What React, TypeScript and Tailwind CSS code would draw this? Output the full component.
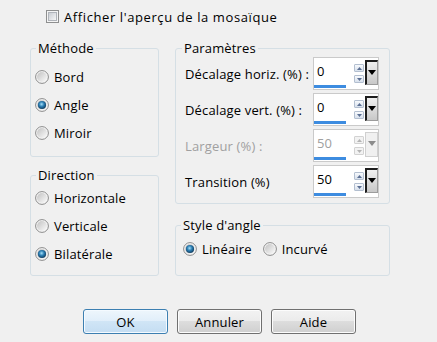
import React, { useId } from 'react';

const Radio: React.FC<{ label: string; checked?: boolean }> = ({ label, checked = false }) => {
  const id = useId().replace(/[^a-zA-Z0-9]/g, '');
  return (
    <div className="flex h-[28px] items-center gap-[5px]">
      <svg width="14" height="14" viewBox="0 0 14 14" className="shrink-0">
        <defs>
          <linearGradient id={`${id}b`} x1="0" y1="0" x2="1" y2="1">
            <stop offset="0" stopColor="#c2c2c2" />
            <stop offset="1" stopColor="#fbfbfb" />
          </linearGradient>
          <radialGradient id={`${id}d`} cx="0.45" cy="0.4" r="0.65">
            <stop offset="0" stopColor="#a6e0f8" />
            <stop offset="0.45" stopColor="#2c7fb4" />
            <stop offset="1" stopColor="#0b3150" />
          </radialGradient>
        </defs>
        <circle cx="7" cy="7" r="6.4" fill="#f6f6f6" stroke="#8a8a8a" />
        <circle cx="7" cy="7" r="5" fill={`url(#${id}b)`} />
        {checked && <circle cx="7" cy="7" r="4.1" fill={`url(#${id}d)`} />}
      </svg>
      <span className="leading-[16px]">{label}</span>
    </div>
  );
};

const SpinBox: React.FC<{ value: string; disabled?: boolean }> = ({ value, disabled = false }) => {
  const arrow = disabled ? '#b4b4b4' : '#5a6e92';
  const btn = disabled
    ? 'border-[#d2d2d2] bg-[#f2f2f2]'
    : 'border-[#b3bfd0] bg-[linear-gradient(#f8fafd,#d7e0ec)]';
  return (
    <div className="flex h-[33px] w-[66px] shrink-0 border border-[#cacaca] bg-white">
      <div className="flex w-[40px] flex-col">
        <span className={`pl-[3px] pt-[5px] leading-[16px] ${disabled ? 'text-[#a0a0a0]' : 'text-black'}`}>{value}</span>
        <div className="mt-auto mb-[1px] h-[3px] w-[32px] bg-[#3d8ce0]" />
      </div>
      <div className="flex w-[10px] flex-col gap-[3px] pt-[6px]">
        <div className={`flex h-[8px] items-center justify-center rounded-[1px] border ${btn}`}>
          <svg width="5" height="3" viewBox="0 0 5 3"><path d="M0 3 L2.5 0 L5 3 Z" fill={arrow} /></svg>
        </div>
        <div className={`flex h-[8px] items-center justify-center rounded-[1px] border ${btn}`}>
          <svg width="5" height="3" viewBox="0 0 5 3"><path d="M0 0 L5 0 L2.5 3 Z" fill={arrow} /></svg>
        </div>
      </div>
      <div
        className={`ml-[1px] mt-[2px] flex h-[25px] w-[13px] justify-center pt-[8px] ${
          disabled
            ? 'border border-[#d0d0d0] bg-[#f0f0f0]'
            : 'border-t-2 border-l-2 border-r border-b border-t-[#1e1e1e] border-l-[#1e1e1e] border-r-[#9c9c9c] border-b-[#9c9c9c] bg-[linear-gradient(#efefef,#c8c8c8)]'
        }`}
      >
        <svg width="8" height="5" viewBox="0 0 8 5"><path d="M0 0 L8 0 L4 5 Z" fill={disabled ? '#8c8c8c' : '#000'} /></svg>
      </div>
    </div>
  );
};

const Row: React.FC<{ label: string; value: string; disabled?: boolean }> = ({ label, value, disabled }) => (
  <div className="flex h-[33px] items-center justify-between">
    <span className={`leading-[16px] ${disabled ? 'text-[#a0a0a0]' : 'text-black'}`}>{label}</span>
    <SpinBox value={value} disabled={disabled} />
  </div>
);

const Group: React.FC<{ title: string; className: string; children: React.ReactNode; left?: string }> = ({ title, className, children, left = 'ml-[5px]' }) => (
  <fieldset className={`m-0 min-w-0 rounded-[3px] border border-[#d5dfe5] p-0 ${className}`}>
    <legend className={`${left} px-[2px] leading-[16px]`}>{title}</legend>
    {children}
  </fieldset>
);

const Button: React.FC<{ label: string; primary?: boolean }> = ({ label, primary }) => (
  <button
    className={`flex h-[25px] w-[85px] items-center justify-center rounded-[3px] border leading-[16px] ${
      primary
        ? 'border-[#3c7fb1] bg-[linear-gradient(#eef6fc_0%,#e0eefa_50%,#d0e5f6_50%,#c4ddf2_100%)] shadow-[inset_0_0_0_1px_#f4faff]'
        : 'border-[#707070] bg-[linear-gradient(#f2f2f2_0%,#ebebeb_50%,#dddddd_50%,#cfcfcf_100%)] shadow-[inset_0_0_0_1px_#fcfcfc]'
    }`}
  >
    {label}
  </button>
);

export default function App() {
  return (
    <div className="flex h-[342px] w-[437px] flex-col bg-[#f0f0f0] pt-[10px] font-['Open_Sans','Noto_Sans',sans-serif] text-[13px] tracking-[0.15px] text-black">
      <div className="ml-[46px] flex h-[13px] items-center gap-[5px]">
        <div className="flex h-[13px] w-[13px] items-center justify-center border border-[#8e8f8f] bg-[#f4f4f4]">
          <div className="h-[9px] w-[9px] border border-[#b0b4ba] bg-[linear-gradient(135deg,#c9cdd3,#f6f6f6)]" />
        </div>
        <span className="leading-[16px] tracking-[0.6px]">Afficher l'aperçu de la mosaïque</span>
      </div>

      <div className="mt-[17px] flex">
        <div className="ml-[30px] flex w-[129px] flex-col gap-[10px]">
          <Group title="Méthode" className="h-[117px]">
            <div className="flex flex-col pl-[4px] pt-[7px]">
              <Radio label="Bord" />
              <Radio label="Angle" checked />
              <Radio label="Miroir" />
            </div>
          </Group>
          <Group title="Direction" className="h-[109px]">
            <div className="flex flex-col pl-[4px] pt-[1px]">
              <Radio label="Horizontale" />
              <Radio label="Verticale" />
              <Radio label="Bilatérale" checked />
            </div>
          </Group>
        </div>

        <div className="ml-[16px] flex w-[215px] flex-col gap-[13px]">
          <Group title="Paramètres" className="h-[164px]" left="ml-[6px]">
            <div className="flex flex-col gap-[3px] pl-[9px] pr-[10px] pt-[1px]">
              <Row label="Décalage horiz. (%) :" value="0" />
              <Row label="Décalage vert. (%) :" value="0" />
              <Row label="Largeur (%) :" value="50" disabled />
              <Row label="Transition (%)" value="50" />
            </div>
          </Group>
          <Group title="Style d'angle" className="h-[59px]">
            <div className="flex gap-[11px] pl-[7px] pt-[2px]">
              <Radio label="Linéaire" checked />
              <Radio label="Incurvé" />
            </div>
          </Group>
        </div>
      </div>

      <div className="ml-[83px] mt-[33px] flex gap-[9px]">
        <Button label="OK" primary />
        <Button label="Annuler" />
        <Button label="Aide" />
      </div>
    </div>
  );
}
